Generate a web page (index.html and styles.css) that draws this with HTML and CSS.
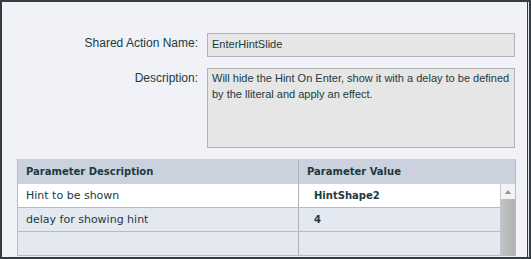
FILE: index.html
```
<!DOCTYPE html>
<html lang="en">
<head>
    <meta charset="UTF-8">
    <title>Shared Action</title>
    <link rel="stylesheet" href="styles.css">
</head>
<body>
    <div class="frame">
        <div class="panel">
            <!-- Action name and description -->
            <div class="form">
                <div class="field">
                    <label class="field-label">Shared Action Name:</label>
                    <div class="field-box">EnterHintSlide</div>
                </div>
                <div class="field">
                    <label class="field-label">Description:</label>
                    <div class="field-box area">Will hide the Hint On Enter, show it with a delay to be defined<br>by the lliteral and apply an effect.</div>
                </div>
            </div>

            <!-- Parameters grid -->
            <div class="grid">
                <div class="grid-head">
                    <div class="cell col-desc">Parameter Description</div>
                    <div class="cell col-value">Parameter Value</div>
                </div>
                <div class="grid-body">
                    <div class="rows">
                        <div class="row">
                            <div class="cell col-desc">Hint to be shown</div>
                            <div class="cell col-value value">HintShape2</div>
                        </div>
                        <div class="row alt">
                            <div class="cell col-desc">delay for showing hint</div>
                            <div class="cell col-value value">4</div>
                        </div>
                        <div class="row alt">
                            <div class="cell col-desc"></div>
                            <div class="cell col-value value"></div>
                        </div>
                    </div>
                    <div class="scrollbar">
                        <div class="scroll-up"><span class="arrow"></span></div>
                        <div class="scroll-track"></div>
                    </div>
                </div>
            </div>
        </div>
    </div>
</body>
</html>
```

FILE: styles.css
```
body {
    margin: 0;
    padding: 0;
    font-family: "Liberation Sans", Arial, sans-serif;
    color: #1b3a41;
}
.frame {
    width: 531px;
    height: 259px;
    box-sizing: border-box;
    border: 2px solid #343c41;
    padding-right: 1px;
    background-color: #e6e9ef;
    overflow: hidden;
}
.panel {
    height: 100%;
    background-color: #f0f2f7;
    border-right: 1px solid #343c41;
    overflow: hidden;
}
.form {
    padding-top: 31px;
}
.field {
    display: flex;
    align-items: flex-start;
    margin-bottom: 11px;
}
.field-label {
    width: 196px;
    text-align: right;
    font-size: 12px;
    line-height: 16px;
    padding-top: 2px;
    color: #223a41;
}
.field-box {
    margin-left: 9px;
    width: 308px;
    height: 24px;
    box-sizing: border-box;
    background-color: #e6e6e6;
    border: 1px solid #b3b3b3;
    padding: 2px 4px 0 4px;
    font-size: 11px;
    line-height: 16px;
    color: #1b3a41;
}
.field-box.area {
    height: 80px;
    padding-top: 1px;
}
.grid {
    margin: 10px 0 0 15px;
    width: 499px;
    box-sizing: border-box;
    border-left: 1px solid #b7bcc6;
    border-right: 1px solid #b7bcc6;
    font-family: "DejaVu Sans", Verdana, sans-serif;
    font-size: 11px;
    color: #1b3a41;
}
.grid-head {
    display: flex;
    height: 25px;
    background-color: #cbd2dd;
    font-weight: bold;
    font-size: 10px;
}
.cell {
    box-sizing: border-box;
    display: flex;
    align-items: center;
    padding-left: 8px;
}
.col-desc {
    width: 281px;
    border-right: 1px solid #aeb3bd;
}
.grid-head .col-value {
    flex: 1;
}
.grid-body {
    display: flex;
}
.rows {
    width: 482px;
    border-right: 1px solid #c4c8d0;
}
.row {
    display: flex;
    height: 24px;
    box-sizing: border-box;
    border-bottom: 1px solid #b7bbc3;
    background-color: #ffffff;
}
.row.alt {
    background-color: #e4e8f0;
}
.row .col-value {
    flex: 1;
}
.value {
    padding-left: 15px;
    font-weight: bold;
    font-size: 10px;
}
.scrollbar {
    width: 14px;
    display: flex;
    flex-direction: column;
}
.scroll-up {
    height: 15px;
    background-color: #f3f3f3;
    display: flex;
    align-items: center;
    justify-content: center;
}
.arrow {
    width: 0;
    height: 0;
    border-left: 3px solid transparent;
    border-right: 3px solid transparent;
    border-bottom: 4px solid #8e9092;
}
.scroll-track {
    flex: 1;
    height: 60px;
    background: linear-gradient(to right, #c2c4c4, #b0b2b2);
}
```
